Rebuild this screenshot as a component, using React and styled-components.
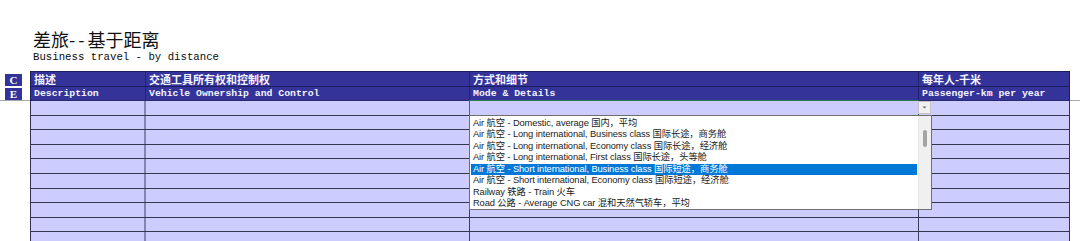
import React from "react";
import styled, { createGlobalStyle } from "styled-components";

const GlobalStyle = createGlobalStyle`
  * { box-sizing: border-box; }
  body {
    margin: 0;
    background: #ffffff;
    font-family: "Liberation Sans", "Noto Sans CJK SC", sans-serif;
    overflow: hidden;
  }
`;

const COLS = "115px 324px 449px 1fr";

const Page = styled.div`
  width: 1080px;
  height: 241px;
  overflow: hidden;
`;

const TitleBlock = styled.div`
  padding: 28px 0 0 33px;
`;

const Title = styled.div`
  font-family: "Noto Sans CJK SC", sans-serif;
  font-size: 18px;
  line-height: 23px;
  color: #111;
`;

const Dash = styled.span`
  letter-spacing: 3px;
`;

const Subtitle = styled.div`
  font-family: "Liberation Mono", monospace;
  font-size: 10.7px;
  line-height: 13px;
  color: #0a0a0a;
`;

const HeaderBand = styled.div`
  display: flex;
  margin-top: 7px;
`;

const LangColumn = styled.div`
  width: 30px;
  display: flex;
  flex-direction: column;
  align-items: flex-start;
  gap: 2px;
  padding: 3px 0 0 5px;
  border-bottom: 1px solid #a8a8a8;
`;

const LangTag = styled.div`
  width: 17px;
  height: 12px;
  background: #333399;
  color: #ffffff;
  font-family: "Liberation Serif", serif;
  font-weight: bold;
  font-size: 11px;
  line-height: 12px;
  text-align: center;
`;

const Spacer = styled.div`
  flex: 1;
  border-bottom: 1px solid #a8a8a8;
`;

const HeaderTable = styled.div`
  width: 1040px;
  background: #333399;
  border: 1px solid #1c1c58;
  border-bottom: none;
`;

const HeaderRow = styled.div`
  display: grid;
  grid-template-columns: ${COLS};
  height: ${({ $h }) => $h}px;
  border-bottom: 1px solid ${({ $last }) => ($last ? "#2a2a70" : "#1c1c60")};
`;

const HeaderCell = styled.div`
  padding-left: 3px;
  color: #f4f4ff;
  font-weight: bold;
  font-size: ${({ $mono }) => ($mono ? "9.8px" : "11px")};
  font-family: ${({ $mono }) =>
    $mono
      ? '"Liberation Mono", monospace'
      : '"Noto Sans CJK SC", "Liberation Serif", serif'};
  line-height: ${({ $h }) => $h - 1}px;
  white-space: nowrap;
  border-right: 1px solid #24246e;
  &:last-child { border-right: none; }
`;

const DataTable = styled.div`
  margin-left: 30px;
  width: 1040px;
  border-left: 1.5px solid #333350;
  border-right: 1.5px solid #333350;
`;

const DataRow = styled.div`
  display: grid;
  grid-template-columns: ${COLS};
  height: 14.6px;
  background: #ccccff;
  border-bottom: 1.5px solid #36364f;
`;

const DataCell = styled.div`
  position: relative;
  border-right: ${({ $soft }) =>
    $soft ? "2px solid #8484b0" : "1px solid #40405e"};
  &:last-child { border-right: none; }
`;

const ActiveCell = styled.div`
  position: absolute;
  left: -1px;
  top: -1.5px;
  right: -1px;
  bottom: -1.5px;
  border: 1px solid #2d7a4e;
  border-bottom-color: #5f8f72;
`;

const DropButton = styled.div`
  position: absolute;
  left: 100%;
  top: 0;
  width: 13px;
  height: 13px;
  background: #f0f0f0;
  border: 1px solid #c4c4c4;
  display: flex;
  align-items: center;
  justify-content: center;
  z-index: 3;
`;

const ListBox = styled.div`
  position: absolute;
  left: -1px;
  top: 13.6px;
  width: 463px;
  height: 95px;
  background: #ffffff;
  border: 1px solid #6e6e6e;
  z-index: 2;
  padding: 2px 14px 0 1px;
`;

const ListItem = styled.div`
  height: 11.5px;
  line-height: 11.5px;
  padding-left: 2px;
  font-family: "Liberation Sans", "Noto Sans CJK SC", sans-serif;
  font-size: 9.3px;
  letter-spacing: -0.1px;
  white-space: nowrap;
  color: ${({ $selected }) => ($selected ? "#ffffff" : "#1a1a1a")};
  background: ${({ $selected }) => ($selected ? "#0078d7" : "transparent")};
`;

const ScrollTrack = styled.div`
  position: absolute;
  top: 0;
  right: 0;
  bottom: 0;
  width: 13px;
  background: #f0f0f0;
  border-left: 1px solid #e8e8e8;
`;

const ScrollThumb = styled.div`
  position: absolute;
  top: 14px;
  left: 4px;
  width: 3.5px;
  height: 17px;
  border-radius: 2px;
  background: #a3a3a3;
`;

const options = [
  "Air 航空 - Domestic, average 国内，平均",
  "Air 航空 - Long international, Business class 国际长途，商务舱",
  "Air 航空 - Long international, Economy class 国际长途，经济舱",
  "Air 航空 - Long international, First class 国际长途，头等舱",
  "Air 航空 - Short international, Business class 国际短途，商务舱",
  "Air 航空 - Short international, Economy class 国际短途，经济舱",
  "Railway 铁路 - Train 火车",
  "Road 公路 - Average CNG car 混和天然气轿车，平均",
];

const headCn = ["描述", "交通工具所有权和控制权", "方式和细节", "每年人-千米"];
const headEn = [
  "Description",
  "Vehicle Ownership and Control",
  "Mode & Details",
  "Passenger-km per year",
];

const Dropdown = () => (
  <>
    <ActiveCell />
    <DropButton>
      <svg width="7" height="5" viewBox="0 0 7 5">
        <path d="M1.5 1.5 L3.5 3.5 L5.5 1.5 Z" fill="#6a6a6a" />
      </svg>
    </DropButton>
    <ListBox>
      {options.map((o, i) => (
        <ListItem key={o} $selected={i === 4}>
          {o}
        </ListItem>
      ))}
      <ScrollTrack>
        <ScrollThumb />
      </ScrollTrack>
    </ListBox>
  </>
);

export default function App() {
  return (
    <Page>
      <GlobalStyle />
      <TitleBlock>
        <Title>
          差旅<Dash>--</Dash>基于距离
        </Title>
        <Subtitle>Business travel - by distance</Subtitle>
      </TitleBlock>
      <HeaderBand>
        <LangColumn>
          <LangTag>C</LangTag>
          <LangTag>E</LangTag>
        </LangColumn>
        <HeaderTable>
          <HeaderRow $h={15}>
            {headCn.map((t) => (
              <HeaderCell key={t} $h={15}>
                {t}
              </HeaderCell>
            ))}
          </HeaderRow>
          <HeaderRow $h={14} $last>
            {headEn.map((t) => (
              <HeaderCell key={t} $h={14} $mono>
                {t}
              </HeaderCell>
            ))}
          </HeaderRow>
        </HeaderTable>
        <Spacer />
      </HeaderBand>
      <DataTable>
        {Array.from({ length: 10 }).map((_, r) => (
          <DataRow key={r}>
            <DataCell $soft />
            <DataCell />
            <DataCell>{r === 0 && <Dropdown />}</DataCell>
            <DataCell />
          </DataRow>
        ))}
      </DataTable>
    </Page>
  );
}
